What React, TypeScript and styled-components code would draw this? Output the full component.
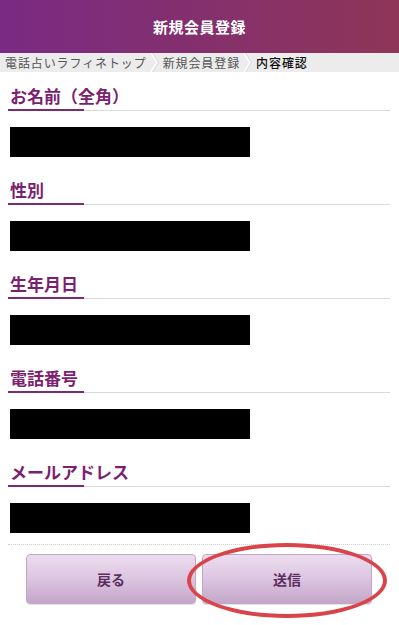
import styled, { createGlobalStyle } from 'styled-components';

const GlobalStyle = createGlobalStyle`
  html, body {
    margin: 0;
    padding: 0;
    background: #fff;
    font-family: "Noto Sans CJK JP", "Noto Sans", sans-serif;
  }
`;

const fields = ['お名前（全角）', '性別', '生年月日', '電話番号', 'メールアドレス'];

function Chevron() {
  return (
    <svg width="10" height="19" viewBox="0 0 10 19">
      <path d="M2 0 L8 9.5 L2 19" fill="none" stroke="#d6d6d6" strokeWidth="1.5" />
      <path d="M1 0 L7 9.5 L1 19" fill="none" stroke="#ffffff" strokeWidth="1.5" />
    </svg>
  );
}

export default function App() {
  return (
    <Page>
      <GlobalStyle />
      <Header>新規会員登録</Header>
      <Breadcrumb>
        <Crumb>電話占いラフィネトップ</Crumb>
        <Chevron />
        <Crumb>新規会員登録</Crumb>
        <Chevron />
        <Crumb current>内容確認</Crumb>
      </Breadcrumb>
      <Content>
        {fields.map((label, i) => (
          <Field key={label} last={i === fields.length - 1}>
            <FieldTitle>{label}</FieldTitle>
            <Redacted />
          </Field>
        ))}
        <Buttons>
          <Button>戻る</Button>
          <Button>送信</Button>
          <Circle />
        </Buttons>
      </Content>
    </Page>
  );
}

const Page = styled.div`
  width: 399px;
  min-height: 625px;
  background: #fff;
`;

const Header = styled.div`
  height: 53px;
  display: flex;
  align-items: center;
  justify-content: center;
  color: #fff;
  font-size: 15px;
  font-weight: bold;
  letter-spacing: 0.5px;
  background: linear-gradient(90deg, #7a2a83 0%, #84306d 50%, #8f3557 100%);
`;

const Breadcrumb = styled.div`
  height: 19px;
  display: flex;
  align-items: center;
  gap: 3px;
  padding-left: 5px;
  background: #ececec;
  font-size: 12px;
  line-height: 19px;
  letter-spacing: 0.9px;
`;

const Crumb = styled.span<{ current?: boolean }>`
  color: ${(p) => (p.current ? '#111' : '#555')};
  font-weight: ${(p) => (p.current ? 500 : 400)};
`;

const Content = styled.div`
  padding: 12px 9px 0 8px;
`;

const Field = styled.div<{ last?: boolean }>`
  margin-bottom: ${(p) => (p.last ? '11px' : '21px')};
`;

const FieldTitle = styled.div`
  position: relative;
  height: 26px;
  line-height: 24px;
  padding-left: 2px;
  font-size: 17px;
  font-weight: bold;
  color: #7d1f70;
  border-bottom: 1px solid #d9d9d9;

  &::after {
    content: '';
    position: absolute;
    left: 0;
    bottom: -1px;
    width: 76px;
    height: 2px;
    background: #7d2a6e;
  }
`;

const Redacted = styled.div`
  width: 240px;
  height: 30px;
  margin: 16px 0 0 2px;
  background: #000;
`;

const Buttons = styled.div`
  position: relative;
  display: flex;
  justify-content: center;
  gap: 6px;
  padding-top: 9px;
  border-top: 1px dotted #cfcfcf;
`;

const Button = styled.div`
  width: 170px;
  height: 50px;
  box-sizing: border-box;
  display: flex;
  align-items: center;
  justify-content: center;
  border: 1px solid #c2a6c6;
  border-radius: 4px;
  background: linear-gradient(180deg, #ecdcef 0%, #dcc5e0 50%, #c3a6c8 100%);
  color: #5b2d60;
  font-size: 14px;
  font-weight: bold;
  box-shadow: 0 1px 1px rgba(0, 0, 0, 0.12);
`;

const Circle = styled.div`
  position: absolute;
  left: 179px;
  top: -2px;
  width: 200px;
  height: 75px;
  box-sizing: border-box;
  border: 4px solid #d8444a;
  border-radius: 50%;
  pointer-events: none;
`;
